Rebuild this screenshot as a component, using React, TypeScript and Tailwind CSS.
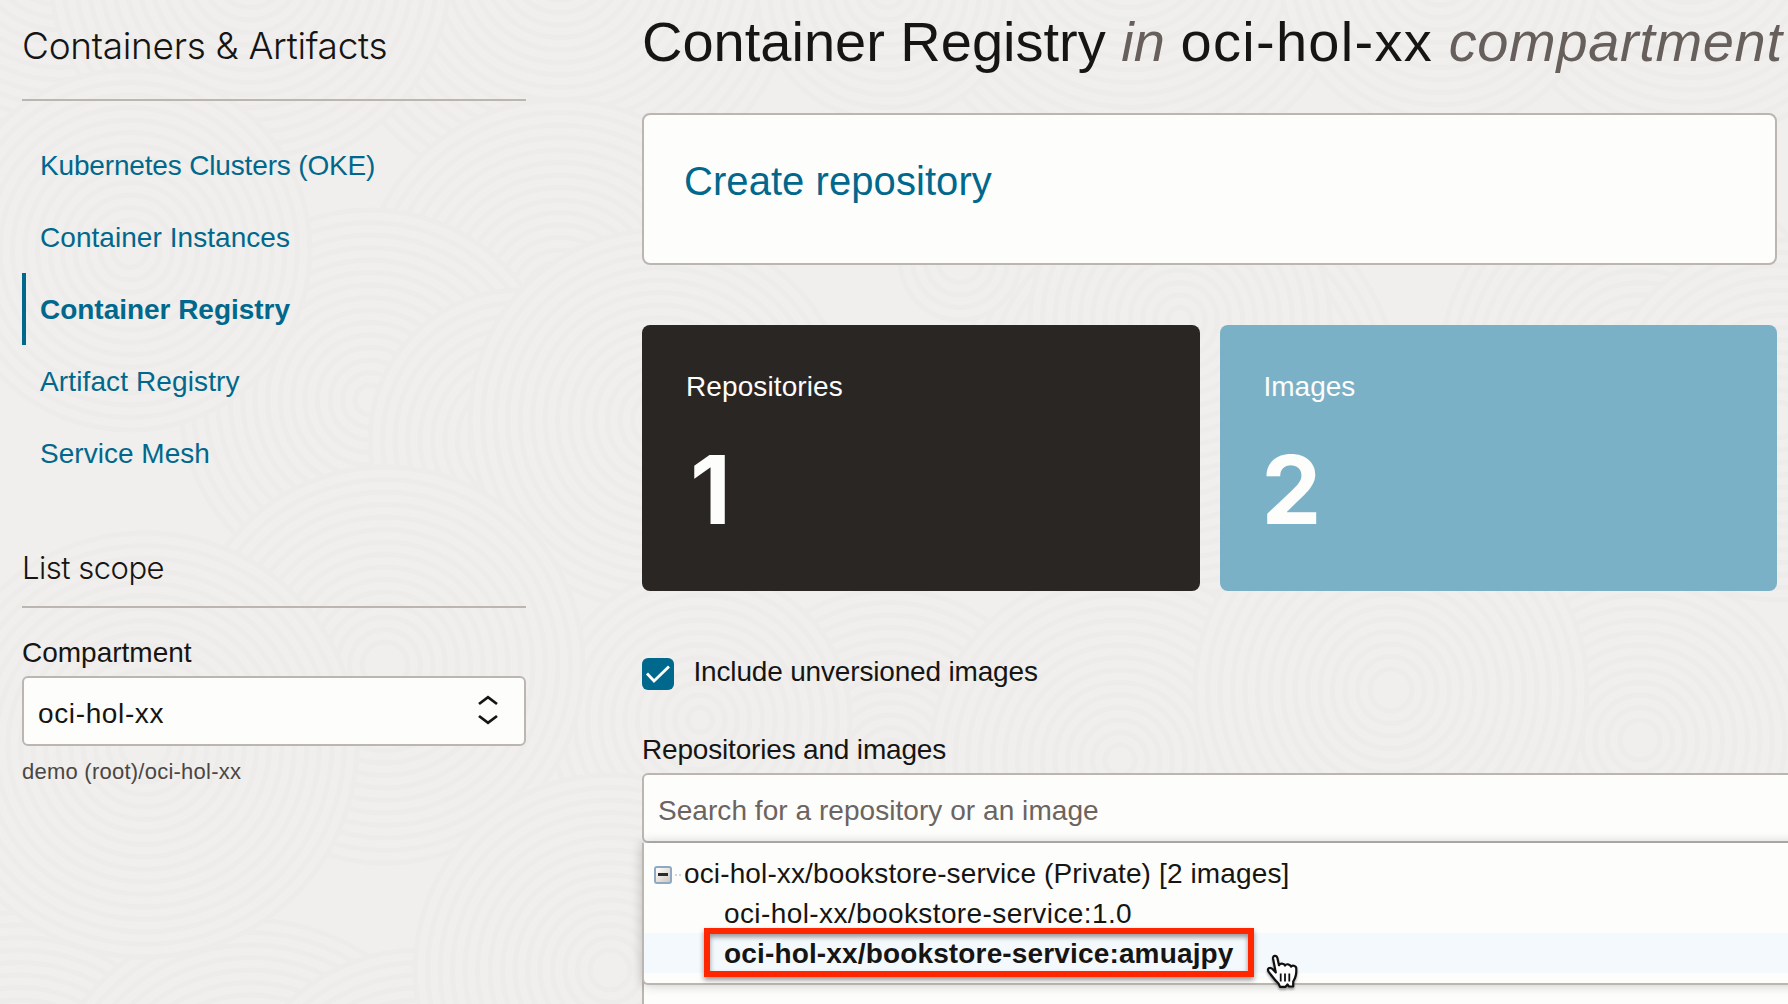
type Disc = { x: number; y: number; r: number };

const discs: Disc[] = [
  { x: 60, y: -60, r: 190 },
  { x: 560, y: -40, r: 240 },
  { x: 250, y: -30, r: 200 },
  { x: 1130, y: -60, r: 230 },
  { x: 1690, y: -60, r: 200 },
  { x: 1440, y: -30, r: 160 },
  { x: 887, y: -10, r: 130 },
  { x: 560, y: 300, r: 200 },
  { x: 370, y: 400, r: 190 },
  { x: 520, y: 440, r: 150 },
  { x: 660, y: 420, r: 190 },
  { x: 1180, y: 400, r: 220 },
  { x: 1180, y: 320, r: 150 },
  { x: 1640, y: 370, r: 200 },
  { x: 1780, y: 420, r: 180 },
  { x: 130, y: 250, r: 180 },
  { x: 960, y: 260, r: 60 },
  { x: 1640, y: 740, r: 170 },
  { x: 890, y: 760, r: 170 },
  { x: 700, y: 720, r: 150 },
  { x: 1120, y: 760, r: 190 },
  { x: 20, y: 1120, r: 220 },
  { x: 250, y: 1130, r: 210 },
  { x: 420, y: 1140, r: 190 },
  { x: 385, y: 665, r: 198 },
  { x: 1391, y: 690, r: 196 },
  { x: 145, y: 745, r: 212 },
  { x: 610, y: 970, r: 195 },
];

function Backdrop() {
  return (
    <svg className="pointer-events-none absolute inset-0" width="1788" height="1004" aria-hidden="true">
      {discs.map((d, i) => (
        <g key={i}>
          <circle cx={d.x} cy={d.y} r={d.r} fill="#f0efed" />
          {Array.from({ length: Math.floor(d.r / 12.5) }, (_, k) => (
            <circle key={k} cx={d.x} cy={d.y} r={d.r - k * 12.5} fill="none" stroke="#edecea" strokeWidth="5" />
          ))}
        </g>
      ))}
    </svg>
  );
}

const links = [
  { label: "Kubernetes Clusters (OKE)", style: "pl-[18px] tracking-[-0.16px]" },
  { label: "Container Instances", style: "pl-[18px] tracking-[0.05px]" },
  { label: "Container Registry", style: "pl-[14px] border-l-4 border-[#00688c] font-bold tracking-[-0.03px]" },
  { label: "Artifact Registry", style: "pl-[18px] tracking-[0.12px]" },
  { label: "Service Mesh", style: "pl-[18px] tracking-[0.02px]" },
];

function Sidebar() {
  return (
    <aside className="w-[504px] shrink-0">
      <h2 className="h-[101px] border-b-2 border-[#bcb6b1] pt-[19px] font-['Inter',sans-serif] text-[37px] leading-[54px] font-light tracking-[-0.3px] whitespace-nowrap">
        Containers &amp; Artifacts
      </h2>
      <nav className="mt-7 flex flex-col">
        {links.map((l) => (
          <a key={l.label} className={`h-[72px] text-[28px] leading-[74px] whitespace-nowrap text-[#00688c] ${l.style}`}>
            {l.label}
          </a>
        ))}
      </nav>
      <h3 className="mt-[59px] h-[60px] border-b-2 border-[#bcb6b1] font-['Inter',sans-serif] text-[31px] leading-10 font-light tracking-[-0.5px]">
        List scope
      </h3>
      <label className="mt-7 block h-10 pt-px text-[28px] leading-8 tracking-[0px]">Compartment</label>
      <div className="flex h-[70px] items-center justify-between rounded-md border-2 border-[#bcb6b1] bg-[#fdfdfb] pr-[26px] pl-[14px]">
        <span className="pt-1.5 text-[28px] leading-8 tracking-[0.63px]">oci-hol-xx</span>
        <svg width="20" height="30" viewBox="0 0 20 30" fill="none" stroke="#161513" strokeWidth="2.8" className="-mt-0.5">
          <path d="M1 9 10 2.2 19 9M1 21 10 27.8 19 21" />
        </svg>
      </div>
      <p className="mt-3 text-[22px] leading-7 tracking-[0.24px] text-[#4a4643]">demo (root)/oci-hol-xx</p>
    </aside>
  );
}

function HandCursor() {
  return (
    <svg className="absolute top-[13px] left-[616px] drop-shadow-[0_2px_1px_rgba(0,0,0,0.35)]" width="50" height="50" viewBox="0 0 50 50" aria-hidden="true">
      <path
        d="M13 12.5C12.6 9.2 16.6 9 17.4 12L19 19.2C20 17 24 17 25 19.6C26 17.6 30 17.8 31 20.6C33 18.8 36.6 19.8 36.3 23C36.6 28 35.5 32 33.2 35.5V40.5H29L27.5 38.5 25.5 40.8H20L18.5 37.5C14 33.5 12 30 8.8 26C6.2 22.4 10 20.6 12.5 23L15.8 26.5Z"
        fill="#fff"
        stroke="#111"
        strokeWidth="2.2"
        strokeLinejoin="round"
      />
      <path d="M20.7 27.5V35.5M25 27.5V35.5M29.3 27.5V35.5" stroke="#111" strokeWidth="1.8" />
    </svg>
  );
}

function TreeToggle() {
  return (
    <>
      <span className="flex h-[18px] w-[18px] items-center justify-center rounded-[3px] border-2 border-[#8fa9c4] bg-linear-to-br from-white to-[#cfc8bd]">
        <span className="h-[3px] w-[10px] bg-[#2a2a2a]" />
      </span>
      <span className="ml-[3px] flex gap-[2px]">
        <i className="h-[2px] w-[2px] bg-[#d4d4d4]" />
        <i className="h-[2px] w-[2px] bg-[#d4d4d4]" />
      </span>
    </>
  );
}

function Dropdown() {
  return (
    <div className="absolute top-0 left-0 h-[142px] w-[1220px] rounded-bl-md border-b-2 border-l-2 border-[#bcb6b1] bg-[#fdfdfb] pt-[10px] text-[28px] leading-[42px] whitespace-nowrap shadow-[0_0_12px_rgba(0,0,0,0.22)]">
      <div className="flex h-10 items-center pt-[3px] pl-[10px]">
        <TreeToggle />
        <span className="-mt-px ml-[3px] tracking-[0.13px]">oci-hol-xx/bookstore-service (Private) [2 images]</span>
      </div>
      <div className="h-10 pl-20 tracking-[0.4px]">oci-hol-xx/bookstore-service:1.0</div>
      <div className="relative h-10 bg-[#f4f9fd] pl-20 font-bold tracking-[0.15px]">
        oci-hol-xx/bookstore-service:amuajpy
        <div className="absolute -top-[5px] left-[60px] h-[49px] w-[550px] border-6 border-[#ff2600] shadow-[0_3px_5px_rgba(0,0,0,0.4),inset_0_3px_5px_rgba(0,0,0,0.4)]" />
        <HandCursor />
      </div>
    </div>
  );
}

function Main() {
  return (
    <main className="ml-[116px] w-[1135px] shrink-0">
      <h1 className="h-[113px] pt-[5.5px] text-[56px] leading-[72px] whitespace-nowrap">
        Container Registry <em className="text-[#665f5b]">in</em> <span className="tracking-[1.3px]">oci-hol-xx</span>{" "}
        <em className="tracking-[0.65px] text-[#665f5b]">compartment</em>
      </h1>
      <section className="h-[152px] rounded-lg border-2 border-[#bcb6b1] bg-[#fdfdfb] pt-[42px] pl-10">
        <a className="text-[40px] leading-[48px] tracking-[0.06px] text-[#00688c]">Create repository</a>
      </section>
      <section className="mt-[60px] grid h-[266px] grid-cols-2 gap-5 text-[#fdfdfb]">
        <div className="rounded-lg bg-[#2a2624] pt-11">
          <p className="pl-[44px] text-[28px] leading-9 tracking-[0.1px]">Repositories</p>
          <p className="mt-[37px] pl-[48px] font-['Inter',sans-serif] text-[95px] leading-[96px] font-bold">1</p>
        </div>
        <div className="rounded-lg bg-[#7ab1c7] pt-11">
          <p className="pl-[44px] text-[28px] leading-9">Images</p>
          <p className="mt-[37px] pl-[42px] font-['Inter',sans-serif] text-[95px] leading-[96px] font-bold">2</p>
        </div>
      </section>
      <div className="mt-16 flex h-[78px]">
        <span className="mt-[3px] flex h-8 w-8 items-center justify-center rounded-md bg-[#00688c]">
          <svg width="26" height="20" viewBox="0 0 26 20" fill="none" stroke="#fff" strokeWidth="2.8">
            <path d="M2 9.5 9 17 24 2.5" />
          </svg>
        </span>
        <span className="ml-[19.5px] pt-px text-[28px] leading-8 tracking-[-0.17px]">Include unversioned images</span>
      </div>
      <label className="block h-10 pt-px text-[28px] leading-8 tracking-[-0.18px]">Repositories and images</label>
      <div className="h-[70px] w-[1220px] rounded-md border-2 border-[#bcb6b1] bg-[#fdfdfb] pt-5 pl-[14px] text-[28px] leading-8 tracking-[0.05px] text-[#6b6460]">
        Search for a repository or an image
      </div>
      <div className="relative h-[161px] w-[1220px] border-l-2 border-[#bcb6b1] bg-[#fdfdfb]">
        <div className="absolute top-0 -left-[2px]">
          <Dropdown />
        </div>
      </div>
    </main>
  );
}

export default function App() {
  return (
    <div className="relative h-[1004px] w-[1788px] overflow-hidden bg-[#f0efed] font-['Liberation_Sans',Arial,sans-serif] text-[#161513]">
      <Backdrop />
      <div className="relative flex pl-[22px]">
        <Sidebar />
        <Main />
      </div>
    </div>
  );
}
